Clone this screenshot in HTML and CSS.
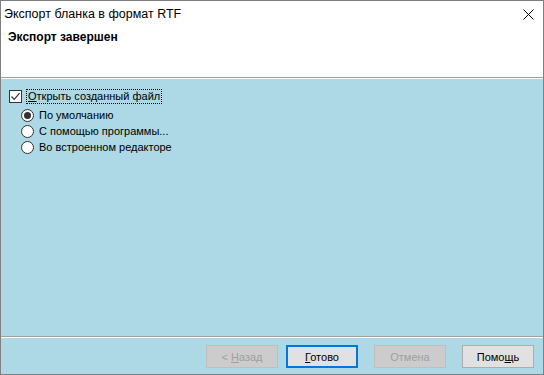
FILE: index.html
```html
<!DOCTYPE html>
<html lang="ru">
<head>
<meta charset="utf-8">
<title>Экспорт бланка в формат RTF</title>
<link rel="stylesheet" href="styles.css">
</head>
<body>
<div class="window">
  <div class="titlebar">
    <span class="title">Экспорт бланка в формат RTF</span>
    <svg class="close" width="11" height="11" viewBox="0 0 11 11"><path d="M0.5 0.5 L10.5 10.5 M10.5 0.5 L0.5 10.5" stroke="#000" stroke-width="1" fill="none"/></svg>
  </div>
  <div class="header">Экспорт завершен</div>
  <div class="hsep"></div>
  <div class="content">
    <div class="options">
      <div class="row check-row">
        <span class="checkbox"><svg width="11" height="11" viewBox="0 0 11 11"><path d="M1.5 5.5 L4.2 8.3 L9.6 2.2" stroke="#333" stroke-width="1.2" fill="none"/></svg></span>
        <span class="focus"><u>О</u>ткрыть созданный файл</span>
      </div>
      <div class="radios">
        <div class="row radio-row"><span class="radio on"></span><span class="label">По умолчанию</span></div>
        <div class="row radio-row"><span class="radio"></span><span class="label">С помощью программы...</span></div>
        <div class="row radio-row"><span class="radio"></span><span class="label">Во встроенном редакторе</span></div>
      </div>
    </div>
    <div class="bsep"></div>
    <div class="buttons">
      <button class="btn disabled">&lt; <u>Н</u>азад</button>
      <button class="btn default"><u>Г</u>отово</button>
      <button class="btn disabled">Отмена</button>
      <button class="btn">Помо<u>щ</u>ь</button>
    </div>
  </div>
</div>
</body>
</html>
```
FILE: styles.css
```css
html, body {
  margin: 0;
  padding: 0;
  background: #fff;
}
.window {
  box-sizing: border-box;
  width: 544px;
  height: 375px;
  border: 1px solid #808080;
  display: flex;
  flex-direction: column;
  font-family: "Liberation Sans", Arial, sans-serif;
  font-size: 12px;
  color: #000;
}
.titlebar {
  height: 24px;
  box-sizing: border-box;
  padding: 5px 0 0 3px;
  display: flex;
  justify-content: space-between;
  align-items: flex-start;
  line-height: 16px;
  background: #fff;
}
.title {
  font-size: 12.5px;
}
.close {
  margin: 3px 9px 0 0;
}
.header {
  height: 52px;
  box-sizing: border-box;
  padding: 4px 0 0 7px;
  line-height: 16px;
  font-weight: bold;
  background: #fff;
}
.hsep {
  height: 1px;
  background: #a0a0a0;
  border-bottom: 1px solid #fff;
}
.content {
  flex: 1;
  display: flex;
  flex-direction: column;
  background: #add8e6;
  font-size: 11px;
}
.options {
  flex: 1;
  padding: 9px 0 0 8px;
}
.row {
  display: flex;
  align-items: center;
  height: 16px;
  line-height: 16px;
}
.checkbox {
  box-sizing: border-box;
  width: 13px;
  height: 13px;
  border: 1px solid #333;
  background: #fff;
  display: flex;
  align-items: center;
  justify-content: center;
}
.checkbox svg { display: block; }
.focus {
  margin-left: 4px;
  padding: 0 1px 0 1px;
  line-height: 13px;
  border: 1px dotted #000;
}
.radios {
  margin-top: 3px;
  padding-left: 12px;
}
.radio {
  box-sizing: border-box;
  width: 13px;
  height: 13px;
  border: 1px solid #333;
  border-radius: 50%;
  background: #fff;
  display: flex;
  align-items: center;
  justify-content: center;
}
.radio.on::after {
  content: "";
  width: 7px;
  height: 7px;
  border-radius: 50%;
  background: #333;
}
.label {
  margin-left: 5px;
}
.bsep {
  height: 1px;
  background: #a0a0a0;
  border-bottom: 1px solid #fff;
}
.buttons {
  display: flex;
  justify-content: flex-end;
  padding: 7px 9px 6px 0;
  gap: 16px;
}
.btn {
  box-sizing: border-box;
  width: 72px;
  height: 23px;
  margin: 0;
  padding: 0;
  font-family: inherit;
  font-size: 11px;
  color: #000;
  background: #e1e1e1;
  border: 1px solid #adadad;
}
.btn:first-child {
  margin-right: -8px;
}
.btn.default {
  border: 2px solid #0078d7;
}
.btn.disabled {
  background: #cccccc;
  border-color: #bfbfbf;
  color: #a0a0a0;
}
```
